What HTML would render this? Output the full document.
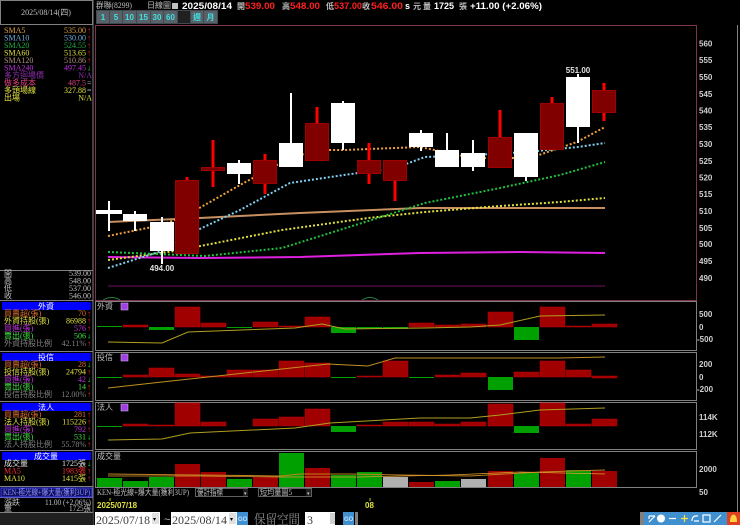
<!DOCTYPE html>
<html><head><meta charset="utf-8"><style>
html,body{margin:0;padding:0;background:#000;width:740px;height:525px;overflow:hidden}
svg{display:block}
.c{font-family:"Liberation Serif","Noto Sans CJK TC",serif;font-size:8px}
.b{font-family:"Liberation Sans","Noto Sans CJK TC",sans-serif;font-weight:bold}
</style></head><body>
<svg width="740" height="525" viewBox="0 0 740 525" xmlns="http://www.w3.org/2000/svg">
<rect width="740" height="525" fill="#000"/>
<g fill="none" stroke="#808080" stroke-width="1">
<rect x="0.5" y="0.5" width="92" height="24"/>
<line x1="93" y1="0" x2="93" y2="525"/>
<line x1="0" y1="270.5" x2="93" y2="270.5"/>
<line x1="0" y1="300.5" x2="93" y2="300.5"/>
<line x1="0" y1="351.5" x2="93" y2="351.5"/>
<line x1="0" y1="401.5" x2="93" y2="401.5"/>
<line x1="0" y1="450.5" x2="93" y2="450.5"/>
<line x1="0" y1="486.5" x2="93" y2="486.5"/>
<line x1="0" y1="497.5" x2="93" y2="497.5"/>
<line x1="0" y1="512.5" x2="93" y2="512.5"/>
</g>
<text x="46" y="15" text-anchor="middle" class="c" fill="#c0c0c0">2025/08/14(四)</text>
<g class="c">
<text x="4" y="33" fill="#e0a040">SMA5</text><text x="86" y="33" text-anchor="end" fill="#e0a040">535.00</text><text x="87" y="33" fill="#ff2020">↑</text>
<text x="4" y="40.5" fill="#70b0e0">SMA10</text><text x="86" y="40.5" text-anchor="end" fill="#70b0e0">530.00</text><text x="87" y="40.5" fill="#ff2020">↑</text>
<text x="4" y="48" fill="#20b040">SMA20</text><text x="86" y="48" text-anchor="end" fill="#20b040">524.55</text><text x="87" y="48" fill="#ff2020">↑</text>
<text x="4" y="55.5" fill="#e0e040">SMA60</text><text x="86" y="55.5" text-anchor="end" fill="#e0e040">513.65</text><text x="87" y="55.5" fill="#ff2020">↑</text>
<text x="4" y="63" fill="#b09080">SMA120</text><text x="86" y="63" text-anchor="end" fill="#b09080">510.86</text><text x="87" y="63" fill="#ff2020">↑</text>
<text x="4" y="70.5" fill="#c030e0">SMA240</text><text x="86" y="70.5" text-anchor="end" fill="#c030e0">497.45</text><text x="87" y="70.5" fill="#20e020">↓</text>
<text x="4" y="78" fill="#9030b0">多方迴場價</text><text x="92" y="78" text-anchor="end" fill="#9030b0">N/A</text>
<text x="4" y="85.5" fill="#e04080">做多成本</text><text x="86" y="85.5" text-anchor="end" fill="#e04080">487.5</text><text x="87" y="85.5" fill="#c0c0c0">=</text>
<text x="4" y="93" fill="#e0e040">多頭場線</text><text x="86" y="93" text-anchor="end" fill="#e0e040">327.88</text><text x="87" y="93" fill="#c0c0c0">=</text>
<text x="4" y="100.5" fill="#e0e040">出場</text><text x="92" y="100.5" text-anchor="end" fill="#e0e040">N/A</text>
</g>
<g class="c" fill="#c0c0c0">
<text x="4" y="276">開</text><text x="91" y="276" text-anchor="end">539.00</text>
<text x="4" y="283.5">高</text><text x="91" y="283.5" text-anchor="end">548.00</text>
<text x="4" y="291">低</text><text x="91" y="291" text-anchor="end">537.00</text>
<text x="4" y="298.5">收</text><text x="91" y="298.5" text-anchor="end">546.00</text>
</g>
<g fill="#0000ff">
<rect x="2" y="302" width="89" height="8"/>
<rect x="2" y="353" width="89" height="8"/>
<rect x="2" y="403" width="89" height="8"/>
<rect x="2" y="452" width="89" height="8"/>
</g>
<g class="c" fill="#ffffff" text-anchor="middle">
<text x="46" y="309">外資</text><text x="46" y="360">投信</text><text x="46" y="410">法人</text><text x="46" y="459">成交量</text>
</g>
<g class="c">
<text x="4" y="316" fill="#e07030">買賣超(張)</text><text x="86" y="316" text-anchor="end" fill="#e07030">70</text><text x="87" y="316" fill="#ff2020">↑</text>
<text x="4" y="323.5" fill="#e0e040">外資持股(張)</text><text x="86" y="323.5" text-anchor="end" fill="#e0e040">86988</text><text x="87" y="323.5" fill="#ff2020">↑</text>
<text x="4" y="331" fill="#c030e0">買進(張)</text><text x="86" y="331" text-anchor="end" fill="#c030e0">576</text><text x="87" y="331" fill="#ff2020">↑</text>
<text x="4" y="338.5" fill="#40e040">賣出(張)</text><text x="86" y="338.5" text-anchor="end" fill="#40e040">506</text><text x="87" y="338.5" fill="#20e020">↓</text>
<text x="4" y="346" fill="#808080">外資持股比例</text><text x="86" y="346" text-anchor="end" fill="#808080">42.11%</text><text x="87" y="346" fill="#ff2020">↑</text>
<text x="4" y="367" fill="#e07030">買賣超(張)</text><text x="86" y="367" text-anchor="end" fill="#e07030">28</text><text x="87" y="367" fill="#20e020">↓</text>
<text x="4" y="374.5" fill="#e0e040">投信持股(張)</text><text x="86" y="374.5" text-anchor="end" fill="#e0e040">24794</text><text x="87" y="374.5" fill="#ff2020">↑</text>
<text x="4" y="382" fill="#c030e0">買進(張)</text><text x="86" y="382" text-anchor="end" fill="#c030e0">42</text><text x="87" y="382" fill="#20e020">↓</text>
<text x="4" y="389.5" fill="#40e040">賣出(張)</text><text x="86" y="389.5" text-anchor="end" fill="#40e040">14</text><text x="87" y="389.5" fill="#ff2020">↑</text>
<text x="4" y="397" fill="#808080">投信持股比例</text><text x="86" y="397" text-anchor="end" fill="#808080">12.00%</text><text x="87" y="397" fill="#ff2020">↑</text>
<text x="4" y="417" fill="#e07030">買賣超(張)</text><text x="86" y="417" text-anchor="end" fill="#e07030">281</text><text x="87" y="417" fill="#ff2020">↑</text>
<text x="4" y="424.5" fill="#e0e040">法人持股(張)</text><text x="86" y="424.5" text-anchor="end" fill="#e0e040">115226</text><text x="87" y="424.5" fill="#ff2020">↑</text>
<text x="4" y="432" fill="#c030e0">買進(張)</text><text x="86" y="432" text-anchor="end" fill="#c030e0">792</text><text x="87" y="432" fill="#ff2020">↑</text>
<text x="4" y="439.5" fill="#40e040">賣出(張)</text><text x="86" y="439.5" text-anchor="end" fill="#40e040">531</text><text x="87" y="439.5" fill="#20e020">↓</text>
<text x="4" y="447" fill="#808080">法人持股比例</text><text x="86" y="447" text-anchor="end" fill="#808080">55.78%</text><text x="87" y="447" fill="#ff2020">↑</text>
<text x="4" y="466" fill="#e0e0e0">成交量</text><text x="86" y="466" text-anchor="end" fill="#e0e0e0">1725張</text><text x="87" y="466" fill="#20e020">↓</text>
<text x="4" y="473.5" fill="#ff3030">MA5</text><text x="86" y="473.5" text-anchor="end" fill="#ff3030">1983張</text><text x="87" y="473.5" fill="#ff2020">↑</text>
<text x="4" y="481" fill="#e0e040">MA10</text><text x="86" y="481" text-anchor="end" fill="#e0e040">1415張</text><text x="87" y="481" fill="#ff2020">↑</text>
</g>
<rect x="1" y="488" width="91" height="9" fill="#101060" stroke="#4040ff"/>
<text x="3" y="495" class="c" font-size="7" fill="#9090ff" textLength="87" lengthAdjust="spacingAndGlyphs">KEN-極光線+爆大量(獲利3UP)</text>
<g class="c" fill="#c0c0c0">
<text x="4" y="505">漲跌</text><text x="91" y="505" text-anchor="end" textLength="46" lengthAdjust="spacingAndGlyphs">11.00 (+2.06%)</text>
<text x="4" y="511">量</text><text x="91" y="511" text-anchor="end" textLength="22" lengthAdjust="spacingAndGlyphs">1725張</text>
</g>
<rect x="0" y="513" width="93" height="12" fill="#202020"/>

<g class="c" fill="#c0c0c0"><text x="96" y="8" textLength="36" lengthAdjust="spacingAndGlyphs">群聯(8299)</text><text x="147" y="8">日線圖</text></g>
<rect x="172" y="3" width="6" height="6" fill="#c0c0c0"/>
<g class="b" font-size="9">
<text x="182" y="9" fill="#fff" textLength="50" lengthAdjust="spacingAndGlyphs">2025/08/14</text>
<text x="237" y="9" fill="#c0c0c0" class="c">開</text><text x="245" y="9" fill="#ff2020" textLength="30" lengthAdjust="spacingAndGlyphs">539.00</text>
<text x="282" y="9" fill="#c0c0c0" class="c">高</text><text x="290" y="9" fill="#ff2020" textLength="30" lengthAdjust="spacingAndGlyphs">548.00</text>
<text x="326" y="9" fill="#c0c0c0" class="c">低</text><text x="334" y="9" fill="#ff2020" textLength="28" lengthAdjust="spacingAndGlyphs">537.00</text>
<text x="362" y="9" fill="#c0c0c0" class="c">收</text><text x="371" y="9" fill="#ff2020" textLength="32" lengthAdjust="spacingAndGlyphs">546.00</text>
<text x="405" y="9" fill="#fff">s</text><text x="413" y="9" fill="#c0c0c0" class="c">元</text>
<text x="423" y="9" fill="#c0c0c0" class="c">量</text><text x="434" y="9" fill="#fff">1725</text><text x="459" y="9" fill="#c0c0c0" class="c">張</text>
<text x="470" y="9" fill="#fff" textLength="72" lengthAdjust="spacingAndGlyphs">+11.00 (+2.06%)</text>
</g>
<g>
<rect x="96" y="10" width="122" height="14" fill="#404850"/>
<g fill="#586068"><rect x="97" y="11" width="12" height="12"/><rect x="110" y="11" width="12" height="12"/><rect x="123" y="11" width="13" height="12"/><rect x="137" y="11" width="13" height="12"/><rect x="151" y="11" width="12" height="12"/><rect x="164" y="11" width="13" height="12"/><rect x="191" y="11" width="12" height="12"/><rect x="204" y="11" width="13" height="12"/></g>
<rect x="178" y="11" width="12" height="12" fill="#202020"/>
<g class="b" font-size="8" fill="#40e0e0" text-anchor="middle">
<text x="103" y="20">1</text><text x="116" y="20">5</text><text x="129.5" y="20">10</text><text x="143.5" y="20">15</text><text x="157" y="20">30</text><text x="170.5" y="20">60</text>
<text x="197" y="20" class="c">週</text><text x="210.5" y="20" class="c">月</text></g>
</g>

<rect x="95.5" y="25.5" width="601" height="275" fill="none" stroke="#803050"/>
<line x1="737.5" y1="25" x2="737.5" y2="525" stroke="#808080"/>
<g class="b" font-size="8" fill="#d0d0d0">
<text x="699" y="46.5">560</text><text x="699" y="63">555</text><text x="699" y="80">550</text><text x="699" y="97">545</text><text x="699" y="113.5">540</text><text x="699" y="130">535</text><text x="699" y="147">530</text><text x="699" y="164">525</text><text x="699" y="180.5">520</text><text x="699" y="197">515</text><text x="699" y="214">510</text><text x="699" y="231">505</text><text x="699" y="247">500</text><text x="699" y="264">495</text><text x="699" y="281">490</text>
</g>
<line x1="108" y1="286" x2="605" y2="286" stroke="#701060" stroke-width="1"/>
<polyline points="108,257 200,258 300,257 420,253 520,252 605,253" fill="none" stroke="#e020e0" stroke-width="2"/>
<polyline points="108,222 200,218 300,213 420,208 605,208" fill="none" stroke="#c89060" stroke-width="2"/>
<polyline points="108,260 175,251 282,230 368,218 425,212 500,206 560,202 605,198" fill="none" stroke="#e0e040" stroke-width="2" stroke-dasharray="2,2"/>
<polyline points="108,252 205,256 282,248 362,223 425,203 500,188 560,175 605,162" fill="none" stroke="#20c040" stroke-width="2" stroke-dasharray="2,2"/>
<polyline points="108,268 165,250 187,235 240,210 290,183 344,175 395,168 425,157 475,155 527,152 578,147 605,143" fill="none" stroke="#80d0f0" stroke-width="2" stroke-dasharray="2,2"/>
<polyline points="108,236 162,225 187,215 240,185 290,158 318,150 344,150 395,148 420,147 473,158 530,158 577,142 605,127" fill="none" stroke="#f0a040" stroke-width="2" stroke-dasharray="2,2"/>
<g stroke="#fff" stroke-width="2" fill="#fff">
<line x1="109" y1="201" x2="109" y2="231"/><rect x="97" y="211" width="24" height="2"/>
<line x1="135" y1="211" x2="135" y2="231"/><rect x="123" y="214" width="24" height="7" stroke="none"/>
<line x1="162" y1="217" x2="162" y2="264"/><rect x="150" y="222" width="24" height="29" stroke="none"/>
<line x1="239" y1="160" x2="239" y2="184"/><rect x="227" y="163" width="24" height="11" stroke="none"/>
<line x1="291" y1="93" x2="291" y2="167"/><rect x="279" y="143" width="24" height="24" stroke="none"/>
<line x1="343" y1="101" x2="343" y2="150"/><rect x="331" y="103" width="24" height="40" stroke="none"/>
<line x1="421" y1="130" x2="421" y2="151"/><rect x="409" y="133" width="24" height="14" stroke="none"/>
<line x1="447" y1="133" x2="447" y2="167"/><rect x="435" y="150" width="24" height="17" stroke="none"/>
<line x1="473" y1="140" x2="473" y2="171"/><rect x="461" y="153" width="24" height="14" stroke="none"/>
<line x1="526" y1="133" x2="526" y2="181"/><rect x="514" y="133" width="24" height="44" stroke="none"/>
<line x1="578" y1="74" x2="578" y2="143"/><rect x="566" y="77" width="24" height="50" stroke="none"/>
</g>
<g stroke="#ff0000" stroke-width="3">
<line x1="187" y1="177" x2="187" y2="254"/><line x1="213" y1="140" x2="213" y2="187"/><line x1="265" y1="154" x2="265" y2="194"/><line x1="317" y1="107" x2="317" y2="161"/><line x1="369" y1="143" x2="369" y2="184"/><line x1="395" y1="160" x2="395" y2="201"/><line x1="500" y1="110" x2="500" y2="168"/><line x1="552" y1="97" x2="552" y2="150"/><line x1="604" y1="83" x2="604" y2="121"/>
</g>
<g fill="#800000" stroke="#a00000" stroke-width="1">
<rect x="175.5" y="180.5" width="23" height="73"/>
<rect x="201.5" y="167.5" width="23" height="3"/>
<rect x="253.5" y="160.5" width="23" height="23"/>
<rect x="305.5" y="123.5" width="23" height="37"/>
<rect x="357.5" y="160.5" width="23" height="13"/>
<rect x="383.5" y="160.5" width="23" height="20"/>
<rect x="488.5" y="137.5" width="23" height="30"/>
<rect x="540.5" y="103.5" width="23" height="46"/>
<rect x="592.5" y="90.5" width="23" height="22"/>
</g>
<g class="b" font-size="8" fill="#e0e0e0" text-anchor="middle"><text x="162" y="271">494.00</text><text x="578" y="73">551.00</text></g>
<path d="M103 300 Q112 295 120 300 M362 300 Q370 295 378 300" stroke="#208040" fill="none"/>

<g fill="none" stroke="#808080">
<rect x="95.5" y="301.5" width="601" height="49"/>
<rect x="95.5" y="352.5" width="601" height="48"/>
<rect x="95.5" y="402.5" width="601" height="47"/>
<rect x="95.5" y="451.5" width="601" height="45"/>
</g>
<g class="c" fill="#c0c0c0"><text x="97" y="309">外資</text><text x="97" y="360">投信</text><text x="97" y="410">法人</text><text x="97" y="459">成交量</text></g>
<g fill="#a040e0" stroke="#e0c0ff" stroke-width="0.5"><rect x="121" y="303" width="7" height="7"/><rect x="121" y="354" width="7" height="7"/><rect x="121" y="404" width="7" height="7"/></g>
<g fill="#a00000" stroke="#c00000" stroke-width="0.5">
<rect x="123" y="325" width="25" height="2"/><rect x="175" y="307" width="25" height="20"/><rect x="201" y="323" width="25" height="4"/><rect x="253" y="322" width="25" height="5"/><rect x="279" y="326" width="25" height="1"/><rect x="305" y="317" width="25" height="10"/><rect x="409" y="323" width="25" height="4"/><rect x="435" y="325" width="25" height="2"/><rect x="461" y="324" width="25" height="3"/><rect x="488" y="312" width="25" height="15"/><rect x="540" y="307" width="25" height="20"/><rect x="566" y="326" width="25" height="1"/><rect x="592" y="324" width="25" height="3"/>
</g>
<g fill="#00a000">
<rect x="97" y="326" width="25" height="1"/><rect x="149" y="327" width="25" height="3"/><rect x="227" y="327" width="25" height="1"/><rect x="331" y="327" width="25" height="6"/><rect x="357" y="327" width="25" height="2"/><rect x="383" y="327" width="25" height="2"/><rect x="514" y="327" width="25" height="13"/>
</g>
<polyline points="108,342 162,343 188,332 295,328 322,324 345,329 425,328 470,327 500,325 540,316 605,315" fill="none" stroke="#b0a020"/>
<g fill="#a00000" stroke="#c00000" stroke-width="0.5">
<rect x="123" y="375" width="25" height="2"/><rect x="149" y="368" width="25" height="9"/><rect x="175" y="374" width="25" height="3"/><rect x="201" y="376" width="25" height="1"/><rect x="227" y="370" width="25" height="7"/><rect x="253" y="370" width="25" height="7"/><rect x="279" y="361" width="25" height="16"/><rect x="305" y="363" width="25" height="14"/><rect x="357" y="376" width="25" height="1"/><rect x="383" y="361" width="25" height="16"/><rect x="435" y="375" width="25" height="2"/><rect x="461" y="373" width="25" height="4"/><rect x="514" y="372" width="25" height="5"/><rect x="540" y="361" width="25" height="16"/><rect x="566" y="370" width="25" height="7"/><rect x="592" y="376" width="25" height="2"/>
</g>
<g fill="#00a000"><rect x="97" y="377" width="25" height="1"/><rect x="331" y="377" width="25" height="1"/><rect x="409" y="377" width="25" height="1"/><rect x="488" y="377" width="25" height="13"/></g>
<polyline points="108,388 162,382 282,369 328,364 368,366 395,358 500,358 560,358 605,357" fill="none" stroke="#c09020"/>
<g fill="#a00000" stroke="#c00000" stroke-width="0.5">
<rect x="123" y="424" width="25" height="2"/><rect x="149" y="425" width="25" height="1"/><rect x="175" y="403" width="25" height="23"/><rect x="201" y="422" width="25" height="4"/><rect x="253" y="419" width="25" height="7"/><rect x="279" y="417" width="25" height="9"/><rect x="305" y="409" width="25" height="17"/><rect x="357" y="425" width="25" height="1"/><rect x="383" y="422" width="25" height="4"/><rect x="409" y="422" width="25" height="4"/><rect x="435" y="424" width="25" height="2"/><rect x="461" y="422" width="25" height="4"/><rect x="488" y="404" width="25" height="22"/><rect x="540" y="403" width="25" height="23"/><rect x="566" y="424" width="25" height="2"/><rect x="592" y="419" width="25" height="7"/>
</g>
<g fill="#00a000"><rect x="97" y="426" width="25" height="1"/><rect x="331" y="426" width="25" height="6"/><rect x="514" y="426" width="25" height="7"/></g>
<polyline points="108,440 162,439 190,433 295,428 330,423 420,418 470,418 500,415 540,410 605,408" fill="none" stroke="#b0a020"/>
<g class="b" font-size="8" fill="#d0d0d0">
<text x="699" y="317">500</text><text x="699" y="330">0</text><text x="697" y="342">-500</text>
<text x="699" y="367">200</text><text x="699" y="380">0</text><text x="697" y="392">-200</text>
<text x="699" y="420">114K</text><text x="699" y="437">112K</text>
<text x="699" y="472">2000</text><text x="699" y="495">50</text>
</g>
<g fill="#00a000">
<rect x="97" y="478" width="25" height="9"/><rect x="123" y="481" width="25" height="6"/><rect x="149" y="477" width="25" height="10"/><rect x="227" y="479" width="25" height="8"/><rect x="279" y="453" width="25" height="34"/><rect x="331" y="475" width="25" height="12"/><rect x="357" y="472" width="25" height="15"/><rect x="435" y="481" width="25" height="6"/><rect x="514" y="473" width="25" height="14"/><rect x="566" y="470" width="25" height="17"/>
</g>
<g fill="#a00000"><rect x="175" y="464" width="25" height="23"/><rect x="201" y="472" width="25" height="15"/><rect x="253" y="477" width="25" height="10"/><rect x="305" y="468" width="25" height="19"/><rect x="409" y="482" width="25" height="5"/><rect x="488" y="471" width="25" height="16"/><rect x="540" y="458" width="25" height="29"/><rect x="592" y="471" width="25" height="16"/></g>
<g fill="#b0b0b0"><rect x="383" y="477" width="25" height="10"/><rect x="461" y="479" width="25" height="8"/></g>
<polyline points="108,474 200,475 280,476 300,474 350,474 400,475 470,476 540,472 605,470" fill="none" stroke="#c08020"/>
<polyline points="108,476 200,476 280,477 360,477 450,475 520,472 605,474" fill="none" stroke="#e0a030" stroke-width="0.7"/>
<line x1="95" y1="487.5" x2="697" y2="487.5" stroke="#808080"/>
<rect x="95" y="488" width="602" height="9" fill="#000"/>
<text x="97" y="495" class="c" font-size="7" fill="#c0c0c0" textLength="92" lengthAdjust="spacingAndGlyphs">KEN-極光線+爆大量(獲利3UP)</text>
<rect x="195.5" y="488.5" width="52" height="8" fill="#000" stroke="#606060"/><text x="197" y="495" class="c" font-size="7" fill="#c0c0c0" textLength="26" lengthAdjust="spacingAndGlyphs">優計指標</text><rect x="243" y="489" width="5" height="7" fill="#202020"/><text x="244" y="495" font-size="5" fill="#ccc">▾</text>
<rect x="258.5" y="488.5" width="53" height="8" fill="#000" stroke="#606060"/><text x="260" y="495" class="c" font-size="7" fill="#c0c0c0" textLength="32" lengthAdjust="spacingAndGlyphs">短均量圖5</text><rect x="306" y="489" width="5" height="7" fill="#202020"/><text x="307" y="495" font-size="5" fill="#ccc">▾</text>
<line x1="110" y1="498" x2="110" y2="501" stroke="#c0c000"/><line x1="370" y1="498" x2="370" y2="501" stroke="#c0c000"/>
<g class="b" font-size="8" fill="#e0e040"><text x="97" y="508">2025/07/18</text><text x="365" y="508">08</text></g>
<rect x="95" y="512" width="642" height="13" fill="#000"/>
<rect x="95" y="512" width="65" height="13" fill="#fff"/>
<text x="96" y="524" font-family="Liberation Serif" font-size="12" fill="#404040" textLength="54" lengthAdjust="spacingAndGlyphs">2025/07/18</text>
<rect x="152" y="513" width="7" height="11" fill="#e0e0e0"/><text x="153" y="521" font-size="6" fill="#000">▾</text>
<text x="164" y="523" font-size="11" fill="#c0c0c0" font-family="Liberation Sans">~</text>
<rect x="171" y="512" width="66" height="13" fill="#fff"/>
<text x="172" y="524" font-family="Liberation Serif" font-size="12" fill="#404040" textLength="55" lengthAdjust="spacingAndGlyphs">2025/08/14</text>
<rect x="229" y="513" width="7" height="11" fill="#e0e0e0"/><text x="230" y="521" font-size="6" fill="#000">▾</text>
<rect x="237" y="512" width="11" height="13" fill="#4090d0"/><text x="238" y="521" font-size="6" fill="#c0e0ff" class="b">GO</text>
<text x="254" y="524" font-family="Liberation Serif,Noto Serif CJK SC,serif" font-size="13" fill="#909090" textLength="46" lengthAdjust="spacingAndGlyphs">保留空間</text>
<rect x="305" y="512" width="30" height="13" fill="#fff"/><text x="307" y="524" font-family="Liberation Serif" font-size="12" fill="#404040">3</text>
<rect x="330" y="513" width="5" height="11" fill="#d0d0d0"/>
<rect x="343" y="512" width="11" height="13" fill="#4090d0"/><text x="344" y="521" font-size="6" fill="#c0e0ff" class="b">GO</text>
<rect x="355" y="512" width="3" height="13" fill="#808080"/>
<rect x="640" y="512" width="4" height="13" fill="#808080"/>
<rect x="644" y="512" width="96" height="13" fill="#4090d0"/>
<g stroke="#fff" stroke-width="1.2" fill="none">
<path d="M649 522 L655 516 M649 516 L655 516 M649 516 L649 519"/>
<circle cx="661" cy="518.5" r="4" fill="#fff" stroke="none"/>
<path d="M669 518.5 H676"/>
<path d="M681 518.5 H688 M684.5 515 V522" stroke="#ffe040"/>
<path d="M692 521 Q692 515 698 516 M694 521 L699 521"/>
<rect x="703" y="515" width="7" height="7"/>
<path d="M714 522 L721 515"/>
</g>
<rect x="727" y="512" width="13" height="13" fill="#e04020"/><path d="M730 522 Q730 515 733.5 514.5 Q737 515 737 522 Z" fill="#ffd040"/>
</svg>
</body></html>
